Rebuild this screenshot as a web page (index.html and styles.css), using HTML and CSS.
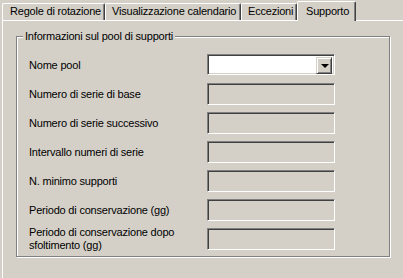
FILE: index.html
```html
<!DOCTYPE html>
<html>
<head>
<meta charset="utf-8">
<link rel="stylesheet" href="styles.css">
</head>
<body>
<div class="tabs">
  <div class="tab t1">Regole di rotazione</div>
  <div class="tab t2">Visualizzazione calendario</div>
  <div class="tab t3">Eccezioni</div>
  <div class="tab t4 sel">Supporto</div>
</div>
<div class="panel">
  <div class="group">
    <div class="legend"><span>Informazioni sul pool di supporti</span></div>
    <div class="rows">
      <div class="label">Nome pool</div>
      <div class="combo"><div class="combo-text"></div><div class="dd"><span class="arrow"></span></div></div>
      <div class="label">Numero di serie di base</div>
      <div class="field"></div>
      <div class="label">Numero di serie successivo</div>
      <div class="field"></div>
      <div class="label">Intervallo numeri di serie</div>
      <div class="field"></div>
      <div class="label">N. minimo supporti</div>
      <div class="field"></div>
      <div class="label">Periodo di conservazione (gg)</div>
      <div class="field"></div>
      <div class="label two">Periodo di conservazione dopo sfoltimento (gg)</div>
      <div class="field"></div>
    </div>
  </div>
</div>
</body>
</html>
```
FILE: styles.css
```css
html, body {
  margin: 0;
  padding: 0;
  background: #D4D0C8;
  width: 403px;
  height: 278px;
  overflow: hidden;
}
body {
  font-family: "Liberation Sans", Arial, sans-serif;
  font-size: 11px;
  letter-spacing: -0.2px;
  color: #000;
}
.tabs {
  display: flex;
  align-items: flex-end;
  height: 20px;
  padding-left: 2px;
  position: relative;
  z-index: 2;
}
.tab {
  box-sizing: border-box;
  height: 17px;
  border-top: 1px solid #fff;
  border-left: 1px solid #fff;
  border-right: 1px solid #404040;
  box-shadow: inset -1px 0 0 #808080;
  border-radius: 2px 2px 0 0;
  padding-left: 6px;
  line-height: 15px;
  white-space: nowrap;
  overflow: hidden;
}
.t1 { width: 103px; padding-left: 7px; }
.t2 { width: 136px; }
.t3 { width: 56px; }
.t4 { width: 59px; }
.sel {
  height: 20px;
  margin-bottom: -1px;
  background: #D4D0C8;
  padding-left: 8px;
  line-height: 19px;
}
.panel {
  border-top: 1px solid #fff;
  border-left: 1px solid #fff;
  margin-left: 2px;
  height: 260px;
  padding: 15px 0 0 13px;
  box-sizing: border-box;
}
.group {
  box-sizing: border-box;
  width: 374px;
  height: 221px;
  border: 1px solid #808080;
  box-shadow: inset 1px 1px 0 #fff, 1px 1px 0 #fff;
}
.legend {
  height: 0;
  padding-left: 6px;
}
.legend span {
  display: inline-block;
  background: #D4D0C8;
  padding: 0 2px;
  line-height: 13px;
  transform: translateY(-7px);
}
.rows {
  display: grid;
  grid-template-columns: 178px 128px;
  grid-auto-rows: 22px;
  row-gap: 7px;
  padding: 17px 0 0 12px;
  align-items: center;
}
.label {
  line-height: 13px;
  white-space: nowrap;
}
.label.two {
  white-space: normal;
  width: 165px;
}
.field, .combo {
  box-sizing: border-box;
  height: 22px;
  border-top: 1px solid #808080;
  border-left: 1px solid #808080;
  border-right: 1px solid #fff;
  border-bottom: 1px solid #fff;
  box-shadow: inset 1px 1px 0 #404040, inset -1px -1px 0 #D4D0C8;
}
.combo {
  height: 21px;
  background: #fff;
  display: flex;
  justify-content: flex-end;
  padding: 2px;
  align-self: start;
}
.dd {
  box-sizing: border-box;
  width: 16px;
  height: 17px;
  background: #D4D0C8;
  border-top: 1px solid #D4D0C8;
  border-left: 1px solid #D4D0C8;
  border-right: 1px solid #404040;
  border-bottom: 1px solid #404040;
  box-shadow: inset 1px 1px 0 #fff, inset -1px -1px 0 #808080;
  display: flex;
  align-items: center;
  justify-content: center;
}
.arrow {
  width: 0;
  height: 0;
  border-left: 4px solid transparent;
  border-right: 4px solid transparent;
  border-top: 4px solid #000;
  margin-left: 1px;
}
```
